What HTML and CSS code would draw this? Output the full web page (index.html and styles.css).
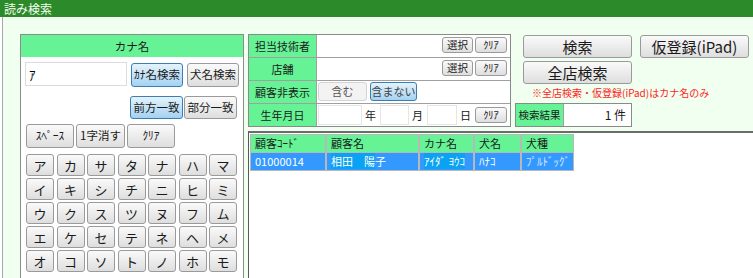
FILE: index.html
```html
<HTML>
	<HEAD>
	<meta http-equiv="content-type" content="text/html; charset=UTF-8">
		<link rel="stylesheet" href="styles.css">
	</HEAD>
	<BODY>
		<div class='titlebar'>読み検索</div>
		<div class='window'>
			<div class='kana-panel'>
				<div class='panel-head'>カナ名</div>
				<div class='panel-body'>
					<div class='search-row'>
						<input class='kana-input' value='ｱ' />
						<button class='btn on w52'>ｶﾅ名検索</button>
						<button class='btn w52'>犬名検索</button>
					</div>
					<div class='match-row'>
						<button class='btn on w53'>前方一致</button>
						<button class='btn w53'>部分一致</button>
					</div>
					<div class='edit-row'>
						<button class='btn w48'>ｽﾍﾟｰｽ</button>
						<button class='btn w49'>1字消す</button>
						<button class='btn w48'>ｸﾘｱ</button>
					</div>
					<div id='kana' class='kana-grid'></div>
				</div>
			</div>

			<div class='main'>
				<div class='top'>
					<div class='form'>
						<div class='label'>担当技術者</div>
						<div class='value right'>
							<button class='btn small w31'>選択</button>
							<button class='btn small w32'>ｸﾘｱ</button>
						</div>
						<div class='label'>店舗</div>
						<div class='value right'>
							<button class='btn small w31'>選択</button>
							<button class='btn small w32'>ｸﾘｱ</button>
						</div>
						<div class='label'>顧客非表示</div>
						<div class='value toggle'>
							<button class='btn flat w49'>含む</button>
							<button class='btn on dim w47'>含まない</button>
						</div>
						<div class='label'>生年月日</div>
						<div class='value date'>
							<input class='date-box w44' />
							<span class='unit'>年</span>
							<input class='date-box w29' />
							<span class='unit'>月</span>
							<input class='date-box w30' />
							<span class='unit'>日</span>
							<button class='btn small w32'>ｸﾘｱ</button>
						</div>
					</div>

					<div class='actions'>
						<div class='big-row'>
							<button class='btn big'>検索</button>
							<button class='btn big'>仮登録(iPad)</button>
						</div>
						<div class='big-row second'>
							<button class='btn big'>全店検索</button>
						</div>
						<div class='note'>※全店検索・仮登録(iPad)はカナ名のみ</div>
						<div class='count'>
							<div class='count-label'>検索結果</div>
							<div class='count-value'>1 件</div>
						</div>
					</div>
				</div>

				<div class='list'>
					<div class='result'>
						<div class='th'>顧客ｺｰﾄﾞ</div>
						<div class='th'>顧客名</div>
						<div class='th'>カナ名</div>
						<div class='th'>犬名</div>
						<div class='th'>犬種</div>
						<div class='td'>01000014</div>
						<div class='td'><span class='hl'>相田　陽</span>子</div>
						<div class='td'><span class='hl'>ｱｲﾀﾞ ﾖｳｺ</span></div>
						<div class='td'>ﾊﾅｺ</div>
						<div class='td pale'>ﾌﾟﾙﾄﾞｯｸﾞ</div>
					</div>
				</div>
			</div>
		</div>

		<script>
			var rows = ['アカサタナハマ', 'イキシチニヒミ', 'ウクスツヌフム', 'エケセテネヘメ', 'オコソトノホモ'];
			var keys = '';
			for (var i = 0; i < rows.length; ++i) {
				for (var j = 0; j < rows[i].length; ++j) {
					keys += `<button class='btn key'>${rows[i][j]}</button>`;
				}
			}
			document.getElementById('kana').innerHTML = keys;
		</script>
	</BODY>
</HTML>
```

FILE: styles.css
```css
			BODY {
				margin		: 0;
				background-color: #ffffff;
				font-family	: "Noto Sans CJK JP", "DejaVu Sans", sans-serif;
				font-size	: 11px;
				color		: #1a1a1a;
				overflow	: hidden;
			}
			.titlebar {
				height		: 17px;
				line-height	: 17px;
				padding-left	: 4px;
				background-color: #2d8a2a;
				color		: #f4fff0;
				font-size	: 12px;
			}
			.window {
				display		: flex;
				height		: 261px;
				margin-left	: 2px;
				border-left	: 1px solid #a8a8a8;
				background-color: #f0fff0;
				overflow	: hidden;
			}

			/* buttons */
			.btn {
				box-sizing	: border-box;
				height		: 23px;
				padding		: 0;
				border		: 1px solid #9a9a9a;
				border-radius	: 3px;
				background	: linear-gradient(#fafafa, #dedede);
				font-family	: "Noto Sans CJK JP", sans-serif;
				font-size	: 11.5px;
				line-height	: 1;
				color		: #1a1a1a;
				white-space	: nowrap;
				flex-shrink	: 0;
			}
			.btn.on {
				border-color	: #3c7db2;
				background	: linear-gradient(#e4f3fc, #a4d2f2);
			}
			.btn.dim { color: #444; font-size: 11px; }
			.btn.flat {
				border-color	: #d4d4d4;
				background	: #f3f3f3;
				color		: #555;
				font-size	: 11px;
			}
			.btn.small {
				height		: 16px;
				font-size	: 10.5px;
			}
			.btn.big {
				width		: 109px;
				height		: 23px;
				font-size	: 15px;
			}
			.w31 { width: 31px; }
			.w32 { width: 32px; }
			.w47 { width: 47px; }
			.w48 { width: 48px; }
			.w49 { width: 49px; }
			.w52 { width: 52px; }
			.w53 { width: 53px; }

			/* kana panel */
			.kana-panel {
				box-sizing	: border-box;
				width		: 224px;
				height		: 300px;
				margin		: 17px 0 0 17px;
				border		: 1px solid #8c8c8c;
				background-color: #ffffff;
				flex-shrink	: 0;
			}
			.panel-head {
				height		: 22px;
				line-height	: 22px;
				text-align	: center;
				font-size	: 11.5px;
				background-color: #66f396;
			}
			.panel-body {
				padding		: 5px 0 0 4px;
			}
			.search-row {
				display		: flex;
				gap		: 4px;
				height		: 24px;
			}
			.kana-input {
				box-sizing	: border-box;
				width		: 102px;
				height		: 24px;
				border		: 1px solid #dcdcdc;
				padding		: 0 3px;
				font-family	: "Noto Sans CJK JP", sans-serif;
				font-size	: 13px;
			}
			.search-row .btn { height: 24px; margin-top: 1px; }
			.match-row {
				display		: flex;
				gap		: 1px;
				margin		: 10px 0 0 105px;
			}
			.edit-row {
				display		: flex;
				gap		: 2px;
				margin		: 5px 0 0 1px;
			}
			.edit-row .btn { height: 24px; }
			.kana-grid {
				display		: grid;
				grid-template-columns: repeat(7, 28px);
				grid-auto-rows	: 22px;
				column-gap	: 2.5px;
				row-gap		: 2px;
				margin		: 6px 0 0 1px;
			}
			.btn.key {
				height		: 22px;
				font-size	: 13px;
			}

			/* search form */
			.main {
				flex		: 1;
				display		: flex;
				flex-direction	: column;
				margin-left	: 4px;
			}
			.top {
				display		: flex;
				height		: 97px;
				padding-top	: 17px;
			}
			.form {
				display		: grid;
				grid-template-columns: 67px 193px;
				grid-auto-rows	: 22px;
				gap		: 1px;
				align-self	: flex-start;
				border		: 1px solid #8a8a8a;
				background-color: #a0a0a0;
			}
			.label {
				background-color: #66f396;
				line-height	: 22px;
				text-align	: center;
			}
			.value {
				display		: flex;
				background-color: #ffffff;
			}
			.value.right {
				justify-content	: flex-end;
				gap		: 2px;
				padding		: 2px 3px 0 0;
			}
			.value.toggle {
				gap		: 3px;
				padding		: 1px 0 0 1px;
			}
			.value.toggle .btn { height: 19px; }
			.value.date {
				align-items	: center;
				padding-left	: 1px;
			}
			.date-box {
				box-sizing	: border-box;
				height		: 20px;
				border		: 1px solid #e6e6e6;
				padding		: 0;
			}
			.w44 { width: 44px; }
			.w29 { width: 29px; }
			.w30 { width: 30px; }
			.unit {
				width		: 18px;
				padding-left	: 3px;
				box-sizing	: border-box;
			}

			/* actions */
			.actions {
				display		: flex;
				flex-direction	: column;
				margin-left	: 4px;
			}
			.big-row {
				display		: flex;
				gap		: 8px;
				margin		: 1px 0 0 8px;
			}
			.big-row.second { margin-top: 3px; }
			.note {
				margin		: 3px 0 0 17px;
				font-size	: 10px;
				line-height	: 12px;
				color		: #ff1e1e;
			}
			.count {
				display		: flex;
				box-sizing	: border-box;
				width		: 117px;
				height		: 24px;
				margin-top	: 4px;
				border		: 1px solid #8a8a8a;
			}
			.count-label {
				width		: 47px;
				flex-shrink	: 0;
				line-height	: 22px;
				text-align	: center;
				font-size	: 10.5px;
				white-space	: nowrap;
				background-color: #66f396;
				border-right	: 1px solid #a0a0a0;
			}
			.count-value {
				flex		: 1;
				line-height	: 22px;
				text-align	: right;
				padding-right	: 5px;
				font-size	: 12px;
				background-color: #ffffff;
			}

			/* result list */
			.list {
				flex		: 1;
				border-top	: 2px solid #6c6c6c;
				border-left	: 1px solid #5a5a5a;
				background-color: #ffffff;
				padding		: 1px 0 0 1px;
			}
			.result {
				display		: inline-grid;
				grid-template-columns: 74px 91px 53px 45px 51px;
				grid-auto-rows	: 17px;
				gap		: 1px 2px;
				border		: 1px solid #b8b8b8;
				background-color: #b8b8b8;
			}
			.th {
				background-color: #66f396;
				padding-left	: 4px;
				line-height	: 17px;
			}
			.td {
				background-color: #3399ff;
				color		: #ffffff;
				padding-left	: 4px;
				line-height	: 17px;
				white-space	: nowrap;
				overflow	: hidden;
			}
			.td.pale { color: #d8e8ff; }
			.hl {
				background-color: #0aa2f2;
			}
```
